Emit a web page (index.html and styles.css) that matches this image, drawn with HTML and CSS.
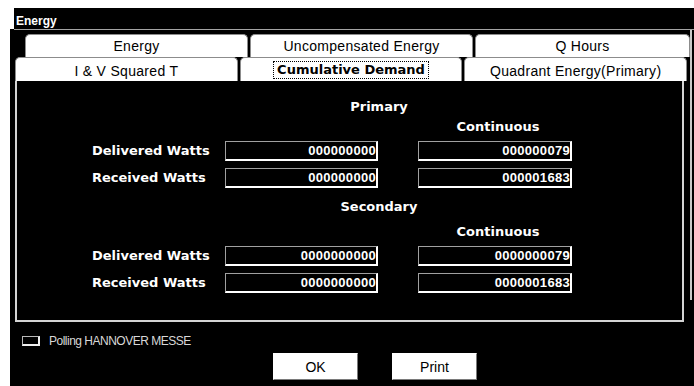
FILE: index.html
```html
<!DOCTYPE html>
<html lang="en">
<head>
    <meta charset="UTF-8">
    <title>Energy</title>
    <link rel="stylesheet" href="styles.css">
</head>

<body>
<div id="titlebar">Energy</div>
<div id="window">
    <div id="frame">
        <div id="main">
            <ul class="tabs back">
                <li>Energy</li>
                <li>Uncompensated Energy</li>
                <li>Q Hours</li>
            </ul>
            <ul class="tabs front">
                <li>I &amp; V Squared T</li>
                <li class="selected"><span>Cumulative Demand</span></li>
                <li>Quadrant Energy(Primary)</li>
            </ul>
            <div id="panel">
                <div class="group">
                    <h3>Primary</h3>
                    <p class="col-title">Continuous</p>
                    <div class="row">
                        <span class="label">Delivered Watts</span>
                        <span class="value">000000000</span>
                        <span class="value">000000079</span>
                    </div>
                    <div class="row">
                        <span class="label">Received Watts</span>
                        <span class="value">000000000</span>
                        <span class="value">000001683</span>
                    </div>
                </div>
                <div class="group secondary">
                    <h3>Secondary</h3>
                    <p class="col-title">Continuous</p>
                    <div class="row">
                        <span class="label">Delivered Watts</span>
                        <span class="value">0000000000</span>
                        <span class="value">0000000079</span>
                    </div>
                    <div class="row">
                        <span class="label">Received Watts</span>
                        <span class="value">0000000000</span>
                        <span class="value">0000001683</span>
                    </div>
                </div>
            </div>
            <div class="status">
                <span class="led"></span>
                <span>Polling HANNOVER MESSE</span>
            </div>
            <div class="buttons">
                <button>OK</button>
                <button>Print</button>
            </div>
        </div>
        <div id="edge"></div>
    </div>
</div>
</body>
</html>
```

FILE: styles.css
```css
*{
    margin:0;
    padding:0;
}
ul{
    list-style: none;
}
body{
    background: #fff;
    overflow: hidden;
    font-family: "Liberation Sans", Arial, sans-serif;
}

#titlebar{
    margin: 8px 0 0 14px;
    height: 21px;
    box-sizing: border-box;
    padding: 6px 0 0 2px;
    background: #000;
    color: #fff;
    font-size: 12px;
    font-weight: bold;
    line-height: 14px;
}
#window{
    margin-left: 10px;
    height: 357px;
    background: #000;
}
#frame{
    display: flex;
    margin-left: 4px;
    border-top: 1px solid #a4a4a4;
}
#main{
    width: 676px;
}
#edge{
    width: 2px;
    height: 270px;
    background: #c8c8c8;
}

/* tabs */
.tabs{
    display: flex;
    gap: 2px;
}
.tabs li{
    box-sizing: border-box;
    background: #fff;
    border: 1px solid #8c8c8c;
    border-bottom: none;
    border-radius: 5px 5px 0 0;
    text-align: center;
    font-size: 14px;
    letter-spacing: .3px;
    color: #000;
}
.back{
    margin: 4px 0 0 11px;
}
.back li{
    width: 223px;
    height: 23px;
    padding-top: 1px;
    line-height: 21px;
}
.back li:last-child{
    width: auto;
    flex: 1;
}
.front{
    margin-left: 1px;
    width: 672px;
}
.front li{
    flex: 1;
    height: 24px;
    padding-top: 3px;
    line-height: 20px;
}
.front li.selected span{
    display: inline-block;
    vertical-align: top;
    padding: 0 3px;
    border: 1px dotted #000;
    font: bold 13px/16px "DejaVu Sans", sans-serif;
    letter-spacing: 0;
}

/* panel */
#panel{
    width: 669px;
    height: 241px;
    box-sizing: border-box;
    margin-left: 1px;
    padding-top: 18px;
    border: 2px solid #d4d4d4;
    border-top: none;
    color: #fff;
}
.group + .group{
    margin-top: 11px;
}
.group h3, .col-title, .label{
    font: bold 13px/16px "DejaVu Sans", sans-serif;
    color: #fff;
}
.group h3{
    width: 200px;
    margin-left: 262px;
    text-align: center;
}
.col-title{
    width: 154px;
    box-sizing: border-box;
    padding-left: 6px;
    margin: 4px 0 0 401px;
    text-align: center;
}
.secondary .col-title{
    margin-top: 9px;
}
.row{
    display: flex;
    align-items: center;
    height: 20px;
    margin: 7px 0 0 75px;
}
.col-title + .row{
    margin-top: 6px;
}
.label{
    width: 133px;
}
.value{
    width: 153px;
    height: 20px;
    box-sizing: border-box;
    border: 1px solid #a0a0a0;
    border-right: 2px solid #fff;
    border-bottom: 2px solid #fff;
    text-align: right;
    font: bold 13px/17px "Liberation Sans", Arial, sans-serif;
    letter-spacing: .3px;
}
.value + .value{
    width: 154px;
    margin-left: 40px;
}

/* bottom */
.status{
    display: flex;
    align-items: center;
    height: 14px;
    margin: 12px 0 0 8px;
    font-size: 12px;
    line-height: 14px;
    letter-spacing: -.5px;
    color: #d8d8d8;
}
.led{
    width: 18px;
    height: 10px;
    box-sizing: border-box;
    margin-right: 9px;
    border: 1px solid #b8b8b8;
    border-right: 2px solid #eee;
    border-bottom: 2px solid #eee;
}
.buttons{
    display: flex;
    gap: 34px;
    margin: 5px 0 0 259px;
}
.buttons button{
    width: 85px;
    height: 27px;
    padding: 0;
    background: #fff;
    border: 1px solid;
    border-color: #fff #7a7a7a #7a7a7a #fff;
    font: 14px "Liberation Sans", Arial, sans-serif;
    color: #000;
}
```
